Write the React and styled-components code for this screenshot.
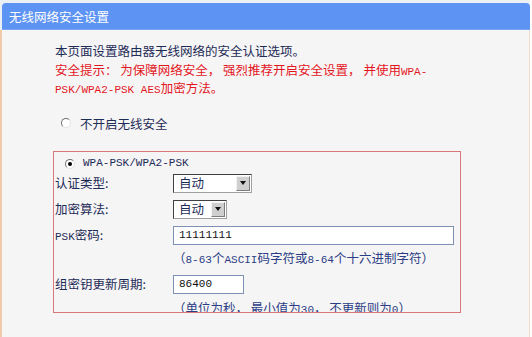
import React from "react";
import styled, { createGlobalStyle } from "styled-components";

const GlobalStyle = createGlobalStyle`
  html, body {
    margin: 0;
    padding: 0;
    background: #ffffff;
  }
  body {
    font-family: "Noto Sans CJK SC", "Liberation Sans", sans-serif;
    font-size: 12.5px;
  }
`;

const Frame = styled.div`
  width: 530px;
  height: 337px;
  padding-top: 3px;
  background: #eceff3;
  box-sizing: border-box;
  overflow: hidden;
`;

const TitleBar = styled.div`
  height: 27px;
  margin-left: 2px;
  background: #5d93f3;
  border-radius: 4px 4px 0 0;
  color: #ffffff;
  font-size: 12.5px;
  line-height: 27px;
  padding-left: 7px;
  border-bottom: 1px solid #7aa6f1;
  box-sizing: border-box;
`;

const Body = styled.div`
  height: 307px;
  background: #f6f5f5;
  border-left: 2px solid #f1cba9;
  border-right: 1px solid #f1dccb;
  padding: 12px 0 0 51px;
  box-sizing: border-box;
  color: #1d2b57;
`;

const Intro = styled.p`
  margin: 0 0 1px 2px;
  height: 18px;
  line-height: 18px;
`;

const Warning = styled.p`
  margin: 0 0 0 2px;
  line-height: 18px;
  color: #e3171f;
  width: 380px;
`;

const Mono = styled.span`
  font-family: "Liberation Mono", "DejaVu Sans Mono", monospace;
  font-size: ${(p) => p.size || 11}px;
  line-height: 1;
`;

const RadioLine = styled.label`
  display: flex;
  align-items: center;
  gap: ${(p) => p.gap || 9}px;
  height: ${(p) => p.h || 18}px;
  margin: ${(p) => p.margin || "0"};
  padding-left: ${(p) => p.indent || 0}px;
`;

const Radio = styled.span`
  width: 8px;
  height: 8px;
  border-radius: 50%;
  background: #ffffff;
  border: 1px solid;
  border-color: #6f6f6f #e2e2e2 #e2e2e2 #6f6f6f;
  position: relative;
  flex: none;
  &::after {
    content: "";
    display: ${(p) => (p.checked ? "block" : "none")};
    position: absolute;
    left: 2px;
    top: 2px;
    width: 4px;
    height: 4px;
    border-radius: 50%;
    background: #000000;
  }
`;

const Box = styled.div`
  width: 408px;
  height: 162px;
  padding-top: 2px;
  border: 1px solid #d9777a;
  box-sizing: border-box;
  overflow: hidden;
`;

const Row = styled.div`
  display: grid;
  grid-template-columns: 118px 1fr;
  align-items: center;
  height: 20px;
  line-height: 18px;
  margin-top: ${(p) => p.gap ?? 6}px;
  padding-left: 1px;
`;

const Label = styled.span`
  white-space: nowrap;
`;

const Hint = styled.span`
  grid-column: 2;
  color: #2b3d85;
  white-space: nowrap;
`;

const Select = styled.div`
  width: ${(p) => p.w}px;
  height: 19px;
  box-sizing: border-box;
  display: flex;
  align-items: center;
  justify-content: space-between;
  background: #ffffff;
  border: 1px solid;
  border-color: #404040 #a0a0a0 #a0a0a0 #404040;
  padding-left: 5px;
`;

const SelectButton = styled.span`
  width: 14px;
  height: 15px;
  margin-right: 1px;
  background: #cfcfcf;
  border: 1px solid;
  border-color: #f2f2f2 #7c7c7c #7c7c7c #f2f2f2;
  box-sizing: border-box;
  display: flex;
  align-items: center;
  justify-content: center;
  &::after {
    content: "";
    border-left: 3.5px solid transparent;
    border-right: 3.5px solid transparent;
    border-top: 4px solid #111111;
  }
`;

const Input = styled.div`
  width: ${(p) => p.w}px;
  height: 19px;
  box-sizing: border-box;
  border: 1px solid #7f90b5;
  background: #ffffff;
  padding-left: 5px;
  display: flex;
  align-items: center;
  color: #111111;
`;

export default function App() {
  return (
    <>
      <GlobalStyle />
      <Frame>
        <TitleBar>无线网络安全设置</TitleBar>
        <Body>
          <Intro>本页面设置路由器无线网络的安全认证选项。</Intro>
          <Warning>
            安全提示： 为保障网络安全， 强烈推荐开启安全设置， 并使用
            <Mono>WPA-PSK/WPA2-PSK AES</Mono>加密方法。
          </Warning>
          <RadioLine margin="17px 0 19px 0" indent={8}>
            <Radio />
            不开启无线安全
          </RadioLine>
          <Box>
            <RadioLine h={19} indent={11} gap={8}>
              <Radio checked />
              <Mono>WPA-PSK/WPA2-PSK</Mono>
            </RadioLine>
            <Row gap={0}>
              <Label>认证类型:</Label>
              <Select w={79}>
                自动
                <SelectButton />
              </Select>
            </Row>
            <Row>
              <Label>加密算法:</Label>
              <Select w={54}>
                自动
                <SelectButton />
              </Select>
            </Row>
            <Row>
              <Label>
                <Mono>PSK</Mono>密码:
              </Label>
              <Input w={281}>
                <Mono>11111111</Mono>
              </Input>
            </Row>
            <Row gap={3}>
              <Hint>
                （<Mono>8-63</Mono>个<Mono>ASCII</Mono>码字符或<Mono>8-64</Mono>个十六进制字符）
              </Hint>
            </Row>
            <Row>
              <Label>组密钥更新周期:</Label>
              <Input w={71}>
                <Mono>86400</Mono>
              </Input>
            </Row>
            <Row gap={4}>
              <Hint>
                （单位为秒， 最小值为<Mono>30</Mono>， 不更新则为<Mono>0</Mono>）
              </Hint>
            </Row>
          </Box>
        </Body>
      </Frame>
    </>
  );
}
